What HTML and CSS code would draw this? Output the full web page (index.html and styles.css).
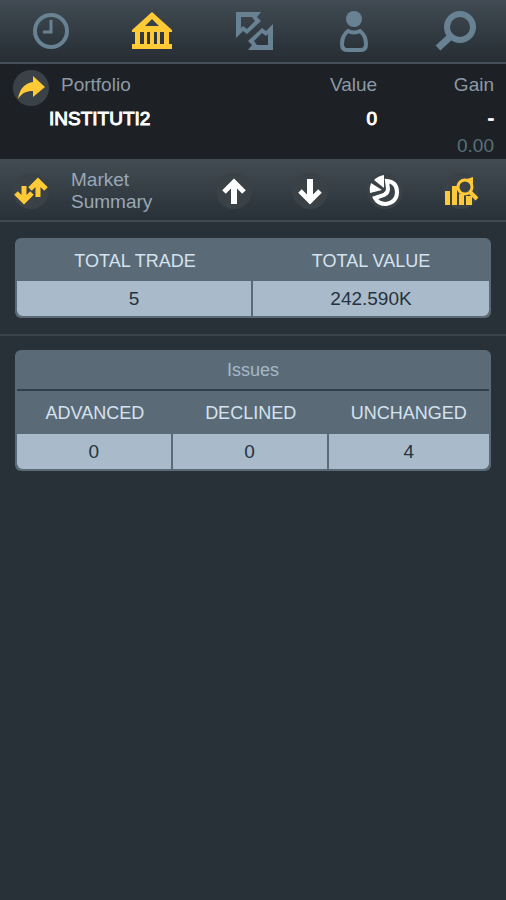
FILE: index.html
```html
<!DOCTYPE html>
<html lang="en">
<head>
<meta charset="utf-8">
<meta name="viewport" content="width=device-width, initial-scale=1">
<title>Market Summary</title>
<link rel="stylesheet" href="styles.css">
</head>
<body>
<nav class="tabs">
  <button class="tab" aria-label="History"><svg viewBox="0 0 44 44"><circle cx="22" cy="22" r="16" fill="none" stroke="currentColor" stroke-width="4"/><path d="M22 11v12h-8" fill="none" stroke="currentColor" stroke-width="3"/></svg></button>
  <button class="tab active" aria-label="Market"><svg viewBox="0 0 44 44" fill="currentColor"><path fill-rule="evenodd" d="M22 3 42 21v2h-3v12h3v5H2v-5h3V23H2v-2zM22 10l-7 7h14zM10 23v12h4V23zm7 0v12h3V23zm7 0v12h3V23zm6 0v12h4V23z"/></svg></button>
  <button class="tab" aria-label="Trade"><svg viewBox="0 0 44 44" fill="currentColor" fill-rule="evenodd"><path d="M5 3H30L26 8l4 4-14 13-4-3-7 7zM10 8v11l2-2 4 3 8-8-3-4z"/><path d="M42 41H17l4-5-4-4 14-13 4 3 7-7zM37 36V25l-2 2-4-3-8 8 3 4z"/></svg></button>
  <button class="tab" aria-label="Account"><svg viewBox="0 0 44 44"><circle cx="22" cy="10" r="8" fill="currentColor"/><path d="M16 22q6 3 12 0c4 3 6 7 6 13q0 6-5 6H15q-5 0-5-6c0-6 2-10 6-13z" fill="none" stroke="currentColor" stroke-width="4"/></svg></button>
  <button class="tab" aria-label="Search"><svg viewBox="0 0 44 44" fill="none" stroke="currentColor"><circle cx="27" cy="18" r="13" stroke-width="6"/><path d="M17 28 5 39" stroke-width="7"/></svg></button>
</nav>
<section class="portfolio">
  <button class="round" aria-label="Open portfolio"><svg viewBox="0 0 36 36"><path d="M5 29C7 17 13 13 20 12V6l12 11-12 10v-6c-7 0-11 2-15 8z" fill="currentColor"/></svg></button>
  <table class="holdings">
    <thead><tr><th>Portfolio</th><th>Value</th><th>Gain</th></tr></thead>
    <tbody><tr class="holding"><td>INSTITUTI2</td><td>0</td><td>-</td></tr>
    <tr class="change"><td></td><td></td><td>0.00</td></tr></tbody>
  </table>
</section>
<header class="market">
  <button class="round" aria-label="Switch view"><svg viewBox="0 0 36 36" fill="none" stroke="currentColor" stroke-width="5"><path d="M11 13v15M3 20l8 8 8-8M25 24V9M17 16l8-8 8 8"/></svg></button>
  <h1>Market Summary</h1>
  <div class="views">
    <button class="round white" aria-label="Gainers"><svg viewBox="0 0 36 36" fill="none" stroke="currentColor"><path d="M18 31V9" stroke-width="6"/><path d="M8 19 18 9l10 10" stroke-width="5"/></svg></button>
    <button class="round white" aria-label="Losers"><svg viewBox="0 0 36 36" fill="none" stroke="currentColor"><path d="M18 6v22" stroke-width="6"/><path d="M8 18l10 10 10-10" stroke-width="5"/></svg></button>
    <button class="round white" aria-label="Sectors"><svg viewBox="0 0 36 36"><path d="M17 15V2Q11 3 7 7z" fill="currentColor"/><path d="M15 17 4 10q-2 5-1 10z" fill="currentColor"/><path d="M20 8q10 1 10 11T19 31q-8 0-11-6l9-3q4-2 4-6z" fill="none" stroke="currentColor" stroke-width="4"/></svg></button>
    <button class="round" aria-label="Analysis"><svg viewBox="0 0 36 36"><path d="M2 18h5v14H2zM9 13h5v19H9zM16 21h5v11h-5zM23 23h6v9h-6zM24 6l6-2v7z" fill="currentColor"/><circle cx="22" cy="14" r="7" fill="none" stroke="currentColor" stroke-width="3"/><path d="m27 19 7 7" stroke="currentColor" stroke-width="4"/></svg></button>
  </div>
</header>
<main>
  <section class="block">
    <table class="panel">
      <thead><tr><th>TOTAL TRADE</th><th>TOTAL VALUE</th></tr></thead>
      <tbody><tr><td>5</td><td>242.590K</td></tr></tbody>
    </table>
  </section>
  <section class="block">
    <table class="panel issues">
      <caption>Issues</caption>
      <thead><tr><th>ADVANCED</th><th>DECLINED</th><th>UNCHANGED</th></tr></thead>
      <tbody><tr><td>0</td><td>0</td><td>4</td></tr></tbody>
    </table>
  </section>
</main>
</body>
</html>
```
FILE: styles.css
```css
* { box-sizing: border-box; }
body {
  margin: 0;
  min-height: 100vh;
  background: #293138;
  color: #99a8b6;
  font: 19px/22px "Liberation Sans", Arial, sans-serif;
}
button {
  padding: 0;
  border: 0;
  background: none;
  color: inherit;
  cursor: pointer;
}
svg { display: block; }
table { border-spacing: 0; }
th { font-weight: 400; }
.tabs {
  display: grid;
  grid-template-columns: repeat(5, 1fr);
  height: 64px;
  background: linear-gradient(#414b53, #262d33);
  border-bottom: 2px solid #454f59;
}
.tab {
  display: grid;
  place-items: center;
  color: #688293;
}
.tab svg { width: 44px; height: 44px; }
.active { color: #ffca36; }
.portfolio {
  display: flex;
  gap: 12px;
  height: 95px;
  padding: 6px 12px 0 13px;
  background: #1d2126;
}
.round {
  flex: none;
  display: grid;
  place-items: center;
  width: 36px;
  height: 36px;
  border-radius: 50%;
  background: #3b4247;
  color: #ffca36;
}
.round svg { width: 36px; height: 36px; }
.white { color: #fff; }
.holdings {
  flex: 1;
  height: 88px;
  table-layout: fixed;
}
.holdings th, .holdings td { padding: 0; text-align: right; }
.holdings th { height: 30px; color: #8c99a5; }
.holdings th:first-child, .holdings td:first-child { width: 47%; text-align: left; }
.holdings th:last-child { width: 27%; }
.holding { color: #fff; -webkit-text-stroke: 1px; }
.holding td { height: 38px; }
.holding td:first-child { text-indent: -12px; }
.change { color: #587078; }
.change td { height: 20px; line-height: 16px; vertical-align: top; }
.market {
  display: flex;
  align-items: center;
  height: 63px;
  padding: 3px 27px 0 13px;
  background: linear-gradient(#434b53, #293138);
  border-bottom: 2px solid #414a52;
}
.market h1 {
  width: 100px;
  margin: 0 0 0 22px;
  font-size: 19px;
  font-weight: 400;
}
.views {
  flex: 1;
  display: flex;
  justify-content: space-between;
  margin-left: 45px;
}
.block {
  padding: 16px 15px;
  border-bottom: 2px solid #3a434b;
}
.block + .block { padding-top: 14px; border: 0; }
.panel {
  width: 100%;
  padding: 2px;
  table-layout: fixed;
  background: #5a6b77;
  border-radius: 6px;
  text-align: center;
}
.panel caption {
  height: 39px;
  padding: 9px 0 8px;
  background: #5a6b77;
  border-radius: 6px 6px 0 0;
  color: #a5b8c8;
  font-size: 18px;
}
.panel th {
  height: 41px;
  padding: 0;
  color: #d5e2ef;
  font-size: 18px;
}
.panel td {
  height: 35px;
  padding: 0;
  background: #a9bbca;
  color: #26323e;
  border-right: 2px solid #5a6b77;
}
.panel td:last-child { border-right: 0; border-radius: 0 0 6px; }
.panel td:first-child { border-radius: 0 0 0 6px; }
.issues { padding-top: 0; border-radius: 0 0 6px 6px; }
.issues th { height: 45px; border-top: 2px solid #2f3f4b; }
.issues th:last-child { width: 34%; }
```
